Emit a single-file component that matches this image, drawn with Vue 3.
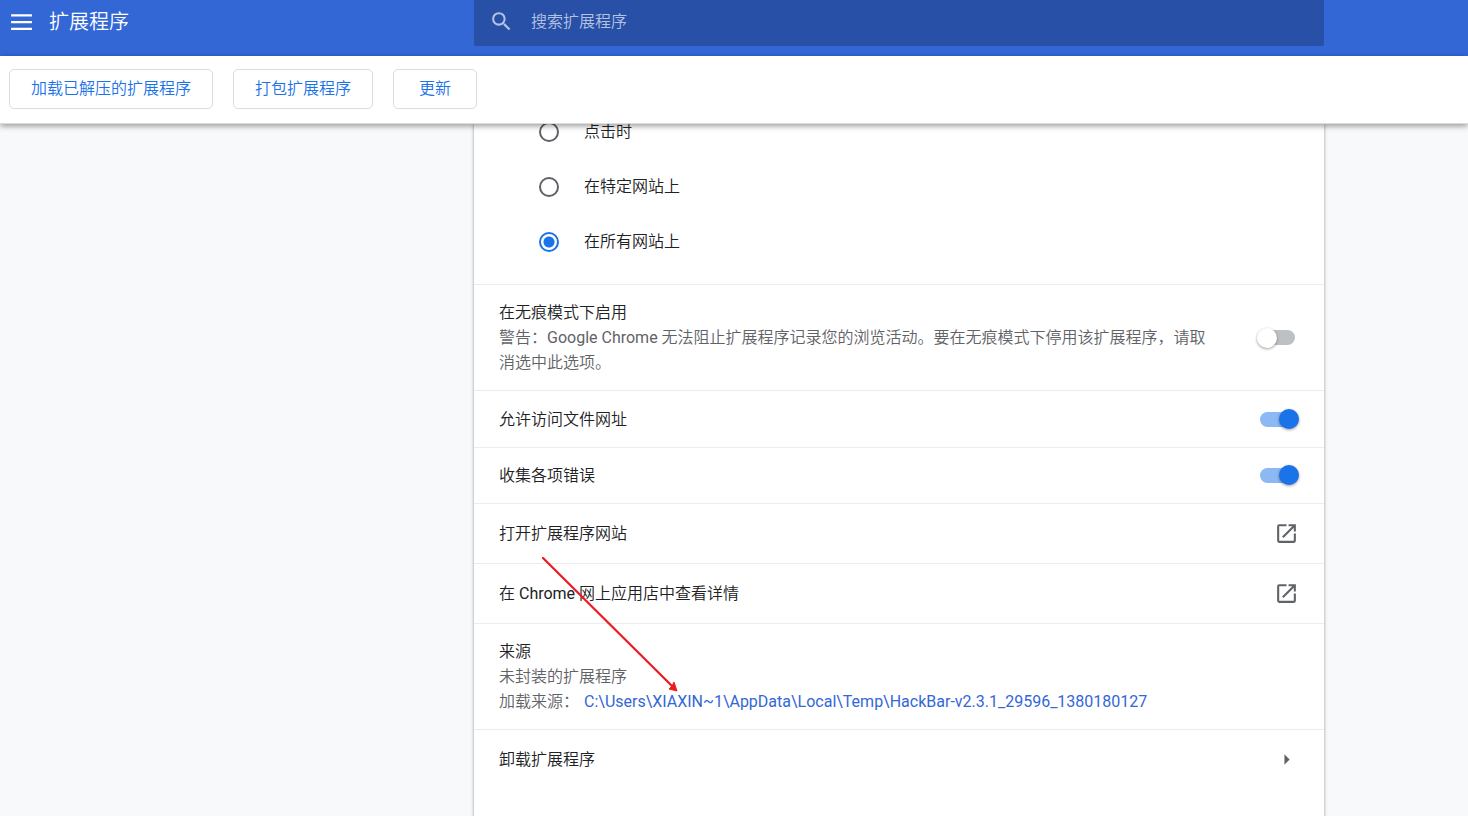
<script setup>
import { ref } from 'vue'

const siteAccess = ref('all')
const accessOptions = [
  { value: 'click', label: '点击时' },
  { value: 'specific', label: '在特定网站上' },
  { value: 'all', label: '在所有网站上' }
]
const incognito = ref(false)
const fileAccess = ref(true)
const collectErrors = ref(true)
const query = ref('')
</script>

<template>
  <div class="page">
    <header class="topbar">
      <div class="brand">
        <button class="menu" type="button" aria-label="主菜单">
          <svg viewBox="0 0 24 24" aria-hidden="true"><path d="M2 4h20v2.300H2zM2 10.500h20v2.300H2zM2 17h20v2.300H2z" /></svg>
        </button>
        <h1>扩展程序</h1>
      </div>
      <label class="search">
        <svg viewBox="0 0 24 24" aria-hidden="true"><path d="M15.5 14h-.79l-.28-.27A6.47 6.47 0 0 0 16 9.5 6.5 6.5 0 1 0 9.5 16c1.61 0 3.09-.59 4.23-1.57l.27.28v.79l5 4.99L20.49 19l-4.99-5zm-6 0C7.01 14 5 11.99 5 9.5S7.01 5 9.5 5 14 7.01 14 9.5 11.99 14 9.5 14z" /></svg>
        <input v-model="query" type="search" placeholder="搜索扩展程序" aria-label="搜索扩展程序" />
      </label>
    </header>

    <div class="toolbar">
      <button type="button">加载已解压的扩展程序</button>
      <button type="button">打包扩展程序</button>
      <button type="button">更新</button>
    </div>

    <main class="content">
      <div class="card">
        <div class="options" role="radiogroup" aria-label="网站访问权限">
          <label v-for="option in accessOptions" :key="option.value" class="option">
            <input v-model="siteAccess" type="radio" name="site-access" :value="option.value" />
            <span>{{ option.label }}</span>
          </label>
        </div>

        <label class="row">
          <span class="text">
            <span class="title">在无痕模式下启用</span>
            <span class="note">警告：Google Chrome 无法阻止扩展程序记录您的浏览活动。要在无痕模式下停用该扩展程序，请取消选中此选项。</span>
          </span>
          <input v-model="incognito" class="toggle" type="checkbox" />
        </label>
        <label class="row switch">
          <span class="text">允许访问文件网址</span>
          <input v-model="fileAccess" class="toggle" type="checkbox" />
        </label>
        <label class="row">
          <span class="text">收集各项错误</span>
          <input v-model="collectErrors" class="toggle" type="checkbox" />
        </label>

        <a class="row link" href="#website">
          <span class="text">打开扩展程序网站</span>
          <svg class="icon" viewBox="0 0 24 24" aria-hidden="true"><path d="M19 19H5V5h7V3H5a2 2 0 0 0-2 2v14a2 2 0 0 0 2 2h14a2 2 0 0 0 2-2v-7h-2v7zM14 3v2h3.59l-9.83 9.83 1.41 1.41L19 6.41V10h2V3h-7z" /></svg>
        </a>
        <a class="row link" href="#store">
          <span class="text">在 Chrome 网上应用店中查看详情</span>
          <svg class="icon" viewBox="0 0 24 24" aria-hidden="true"><path d="M19 19H5V5h7V3H5a2 2 0 0 0-2 2v14a2 2 0 0 0 2 2h14a2 2 0 0 0 2-2v-7h-2v7zM14 3v2h3.59l-9.83 9.83 1.41 1.41L19 6.41V10h2V3h-7z" /></svg>
        </a>

        <section class="row">
          <div class="text">
            <div class="title">来源</div>
            <div class="note">未封装的扩展程序</div>
            <div class="note source">
              <span>加载来源：</span>
              <a href="#path">C:\Users\XIAXIN~1\AppData\Local\Temp\HackBar-v2.3.1_29596_1380180127</a>
            </div>
          </div>
        </section>

        <button class="row link" type="button">
          <span class="text">卸载扩展程序</span>
          <svg class="icon" viewBox="0 0 24 24" aria-hidden="true"><path d="M10 7l5 5-5 5z" /></svg>
        </button>

        <svg class="pointer" viewBox="0 0 140 140" aria-hidden="true">
          <path d="M1 1L130 129" fill="none" stroke="#ed1c24" stroke-width="2.300" stroke-linecap="round" />
          <path d="M135 134L127 132L130 129L132 125z" fill="#ed1c24" stroke="#ed1c24" />
        </svg>
      </div>
    </main>
  </div>
</template>

<style>
body {
  background: #f8f9fa;
}
</style>

<style scoped>
.page {
  display: flex;
  flex-direction: column;
  height: 100vh;
  overflow: hidden;
  font: 16px/25px Roboto, "Noto Sans CJK SC DemiLight", "Noto Sans CJK SC", sans-serif;
  color: #202124;
  background: #f8f9fb;
}

button,
input {
  font: inherit;
  margin: 0;
}

.topbar,
.content {
  display: grid;
  grid-template-columns: 79fr minmax(0, 850px) 24fr;
}

.topbar {
  flex: none;
  height: 56px;
  background: #3367d6;
  color: #fff;
}

.brand {
  display: flex;
  align-items: center;
  gap: 15px;
  height: 44px;
  padding-left: 9px;
}

.menu {
  display: flex;
  padding: 0;
  border: 0;
  background: none;
  color: #fff;
}

.menu svg,
.search svg,
.icon {
  flex: none;
  width: 25px;
  height: 25px;
  fill: currentColor;
}

h1 {
  margin: 0;
  font-size: 20px;
  font-weight: 400;
}

.search {
  display: flex;
  align-items: center;
  gap: 17px;
  height: 42px;
  padding: 0 15px 4px;
  border-radius: 0 0 2px 2px;
  background: #2850a7;
  color: #b4c3e3;
}

.search input {
  flex: 1;
  min-width: 0;
  padding: 0;
  border: 0;
  outline: 0;
  background: none;
  color: #fff;
}

.search input::placeholder {
  color: #b4c3e3;
  opacity: 1;
}

.toolbar {
  position: relative;
  z-index: 1;
  flex: none;
  display: flex;
  align-items: flex-start;
  gap: 20px;
  padding: 13px 9px 14px;
  border-bottom: 1px solid #dadce0;
  background: #fff;
  box-shadow: 0 2px 6px rgba(0, 0, 0, 0.4);
}

.toolbar button {
  min-width: 84px;
  height: 40px;
  padding: 0 21px 2px;
  border: 1px solid #dadce0;
  border-radius: 5px;
  background: #fff;
  color: #1a73e8;
}

.content {
  flex: 1;
  min-height: 0;
}

.card {
  position: relative;
  grid-column: 2;
  background: #fff;
  box-shadow: 0 1px 3px 1px rgba(60, 64, 67, 0.2), 0 1px 2px rgba(60, 64, 67, 0.3);
}

.options {
  margin-top: -20px;
  padding: 0 24px 15px 65px;
}

.option {
  display: flex;
  align-items: center;
  gap: 25px;
  height: 55px;
}

.option input {
  appearance: none;
  flex: none;
  width: 20px;
  height: 20px;
  border: 2px solid #5f6368;
  border-radius: 50%;
}

.option input:checked {
  border-color: #1a73e8;
  background: radial-gradient(circle, #1a73e8 5px, transparent 6px);
}

.row {
  box-sizing: border-box;
  display: flex;
  align-items: center;
  width: 100%;
  padding: 15px 25px;
  border: 0;
  border-top: 1px solid #ececec;
  background: none;
  color: inherit;
  text-align: left;
  text-decoration: none;
}

.switch {
  padding-top: 16px;
}

.link {
  min-height: 60px;
}

.text {
  flex: 1;
  min-width: 0;
}

.title,
.note {
  display: block;
}

.note {
  color: #5f6368;
}

.source {
  display: flex;
  gap: 5px;
}

.source a {
  color: #3367d6;
  text-decoration: none;
}

.toggle {
  appearance: none;
  flex: none;
  position: relative;
  width: 35px;
  height: 15px;
  margin: 0 4px 0 45px;
  border-radius: 8px;
  background: #bdc1c6;
}

.toggle::before {
  content: "";
  position: absolute;
  top: -2px;
  left: -3px;
  width: 20px;
  height: 20px;
  border-radius: 50%;
  background: #fff;
  box-shadow: 0 1px 3px rgba(0, 0, 0, 0.4);
}

.toggle:checked {
  background: #8cb8f3;
}

.toggle:checked::before {
  top: -3px;
  left: 19px;
  background: #1a73e8;
}

.icon {
  color: #5f6368;
}

/* Red callout arrow laid over the rows */
.pointer {
  position: absolute;
  top: 433px;
  left: 68px;
  width: 140px;
  height: 140px;
  pointer-events: none;
}
</style>
